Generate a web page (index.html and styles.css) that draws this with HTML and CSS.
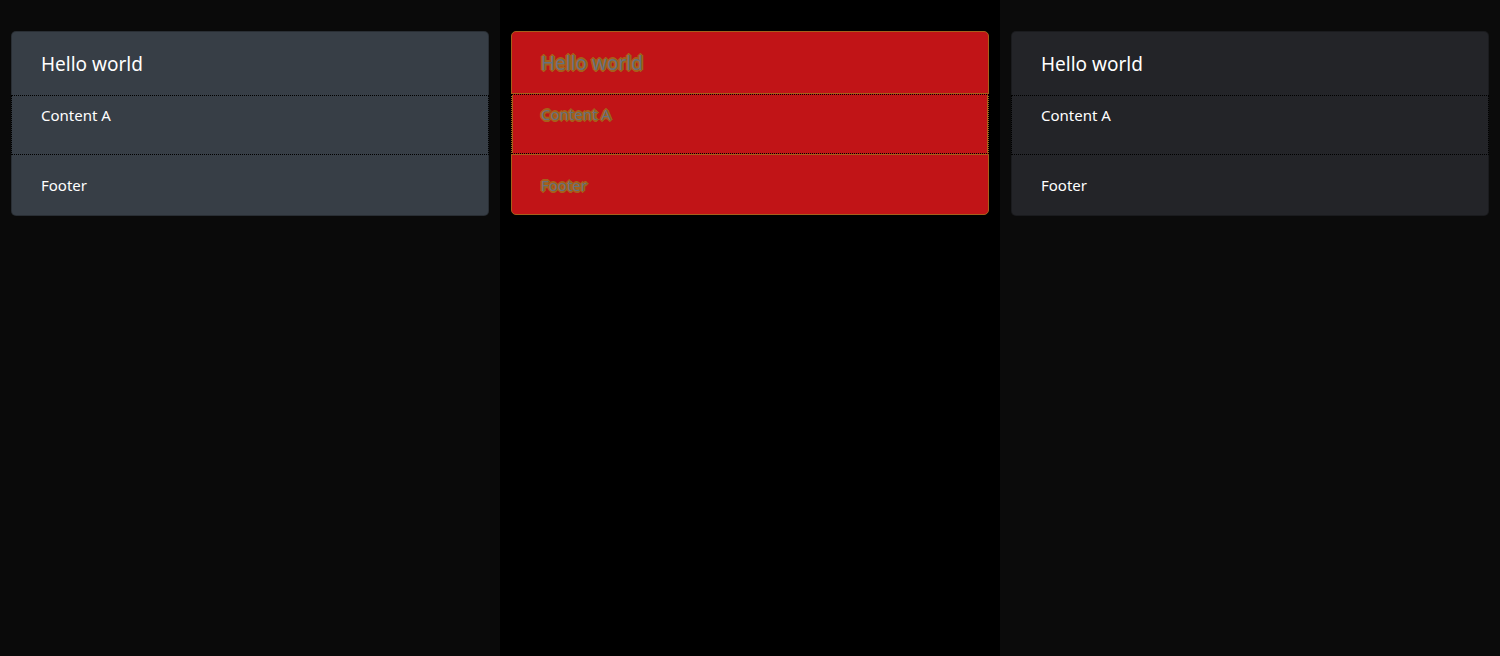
FILE: index.html
```html
<!DOCTYPE html>
<html lang="en">
<head>
<meta charset="utf-8">
<title>Cards</title>
<link rel="stylesheet" href="styles.css">
</head>
<body>
<div class="columns">
  <section class="col col-left">
    <div class="card card-slate">
      <div class="card-header">Hello world</div>
      <div class="card-body">Content A</div>
      <div class="card-footer">Footer</div>
    </div>
  </section>
  <section class="col col-mid">
    <div class="card card-red">
      <div class="card-header">Hello world</div>
      <div class="card-body">Content A</div>
      <div class="card-footer">Footer</div>
    </div>
  </section>
  <section class="col col-right">
    <div class="card card-dark">
      <div class="card-header">Hello world</div>
      <div class="card-body">Content A</div>
      <div class="card-footer">Footer</div>
    </div>
  </section>
</div>
</body>
</html>
```
FILE: styles.css
```css
html, body {
  margin: 0;
  padding: 0;
  background: #000;
}
body {
  font-family: "Noto Sans", "Open Sans", sans-serif;
  color: #fff;
}
.columns {
  display: grid;
  grid-template-columns: 500px 500px 500px;
  height: 656px;
}
.col {
  padding: 31px 11px 0;
}
.col-left { background: #0a0a0a; }
.col-mid { background: #000; }
.col-right { background: #0b0b0b; }

.card {
  border: 1px solid rgba(0, 0, 0, 0.25);
  border-radius: 5px;
  display: flex;
  flex-direction: column;
}
.card-header {
  height: 63px;
  box-sizing: border-box;
  padding: 0 29px;
  display: flex;
  align-items: center;
  font-size: 19px;
}
.card-body {
  margin: 0 -1px;
  height: 60px;
  box-sizing: border-box;
  border: 1px dotted #000;
  padding: 8px 29px 0;
  font-size: 15px;
  line-height: 22px;
}
.card-footer {
  height: 60px;
  box-sizing: border-box;
  padding: 0 29px;
  display: flex;
  align-items: center;
  font-size: 15px;
}

.card-slate { background: #373e46; }
.card-dark { background: #232428; }

.card-red {
  background: #c11417;
  border-color: #a5601b;
  color: #66707e;
  text-shadow:
    1px 0 0 #a5601b, -1px 0 0 #a5601b, 0 1px 0 #a5601b, 0 -1px 0 #a5601b,
    1px 1px 0 #a5601b, -1px -1px 0 #a5601b, 1px -1px 0 #a5601b, -1px 1px 0 #a5601b,
    2px 0 0 #a5601b, -2px 0 0 #a5601b, 0 2px 0 #a5601b, 0 -2px 0 #a5601b;
}
.card-red .card-header {
  border-bottom: 1px solid #a5601b;
  height: 62px;
}
.card-red .card-body {
  box-shadow: inset 1px 0 0 #a5601b, inset -1px 0 0 #a5601b;
}
.card-red .card-footer {
  border-top: 1px solid #a5601b;
}
```
